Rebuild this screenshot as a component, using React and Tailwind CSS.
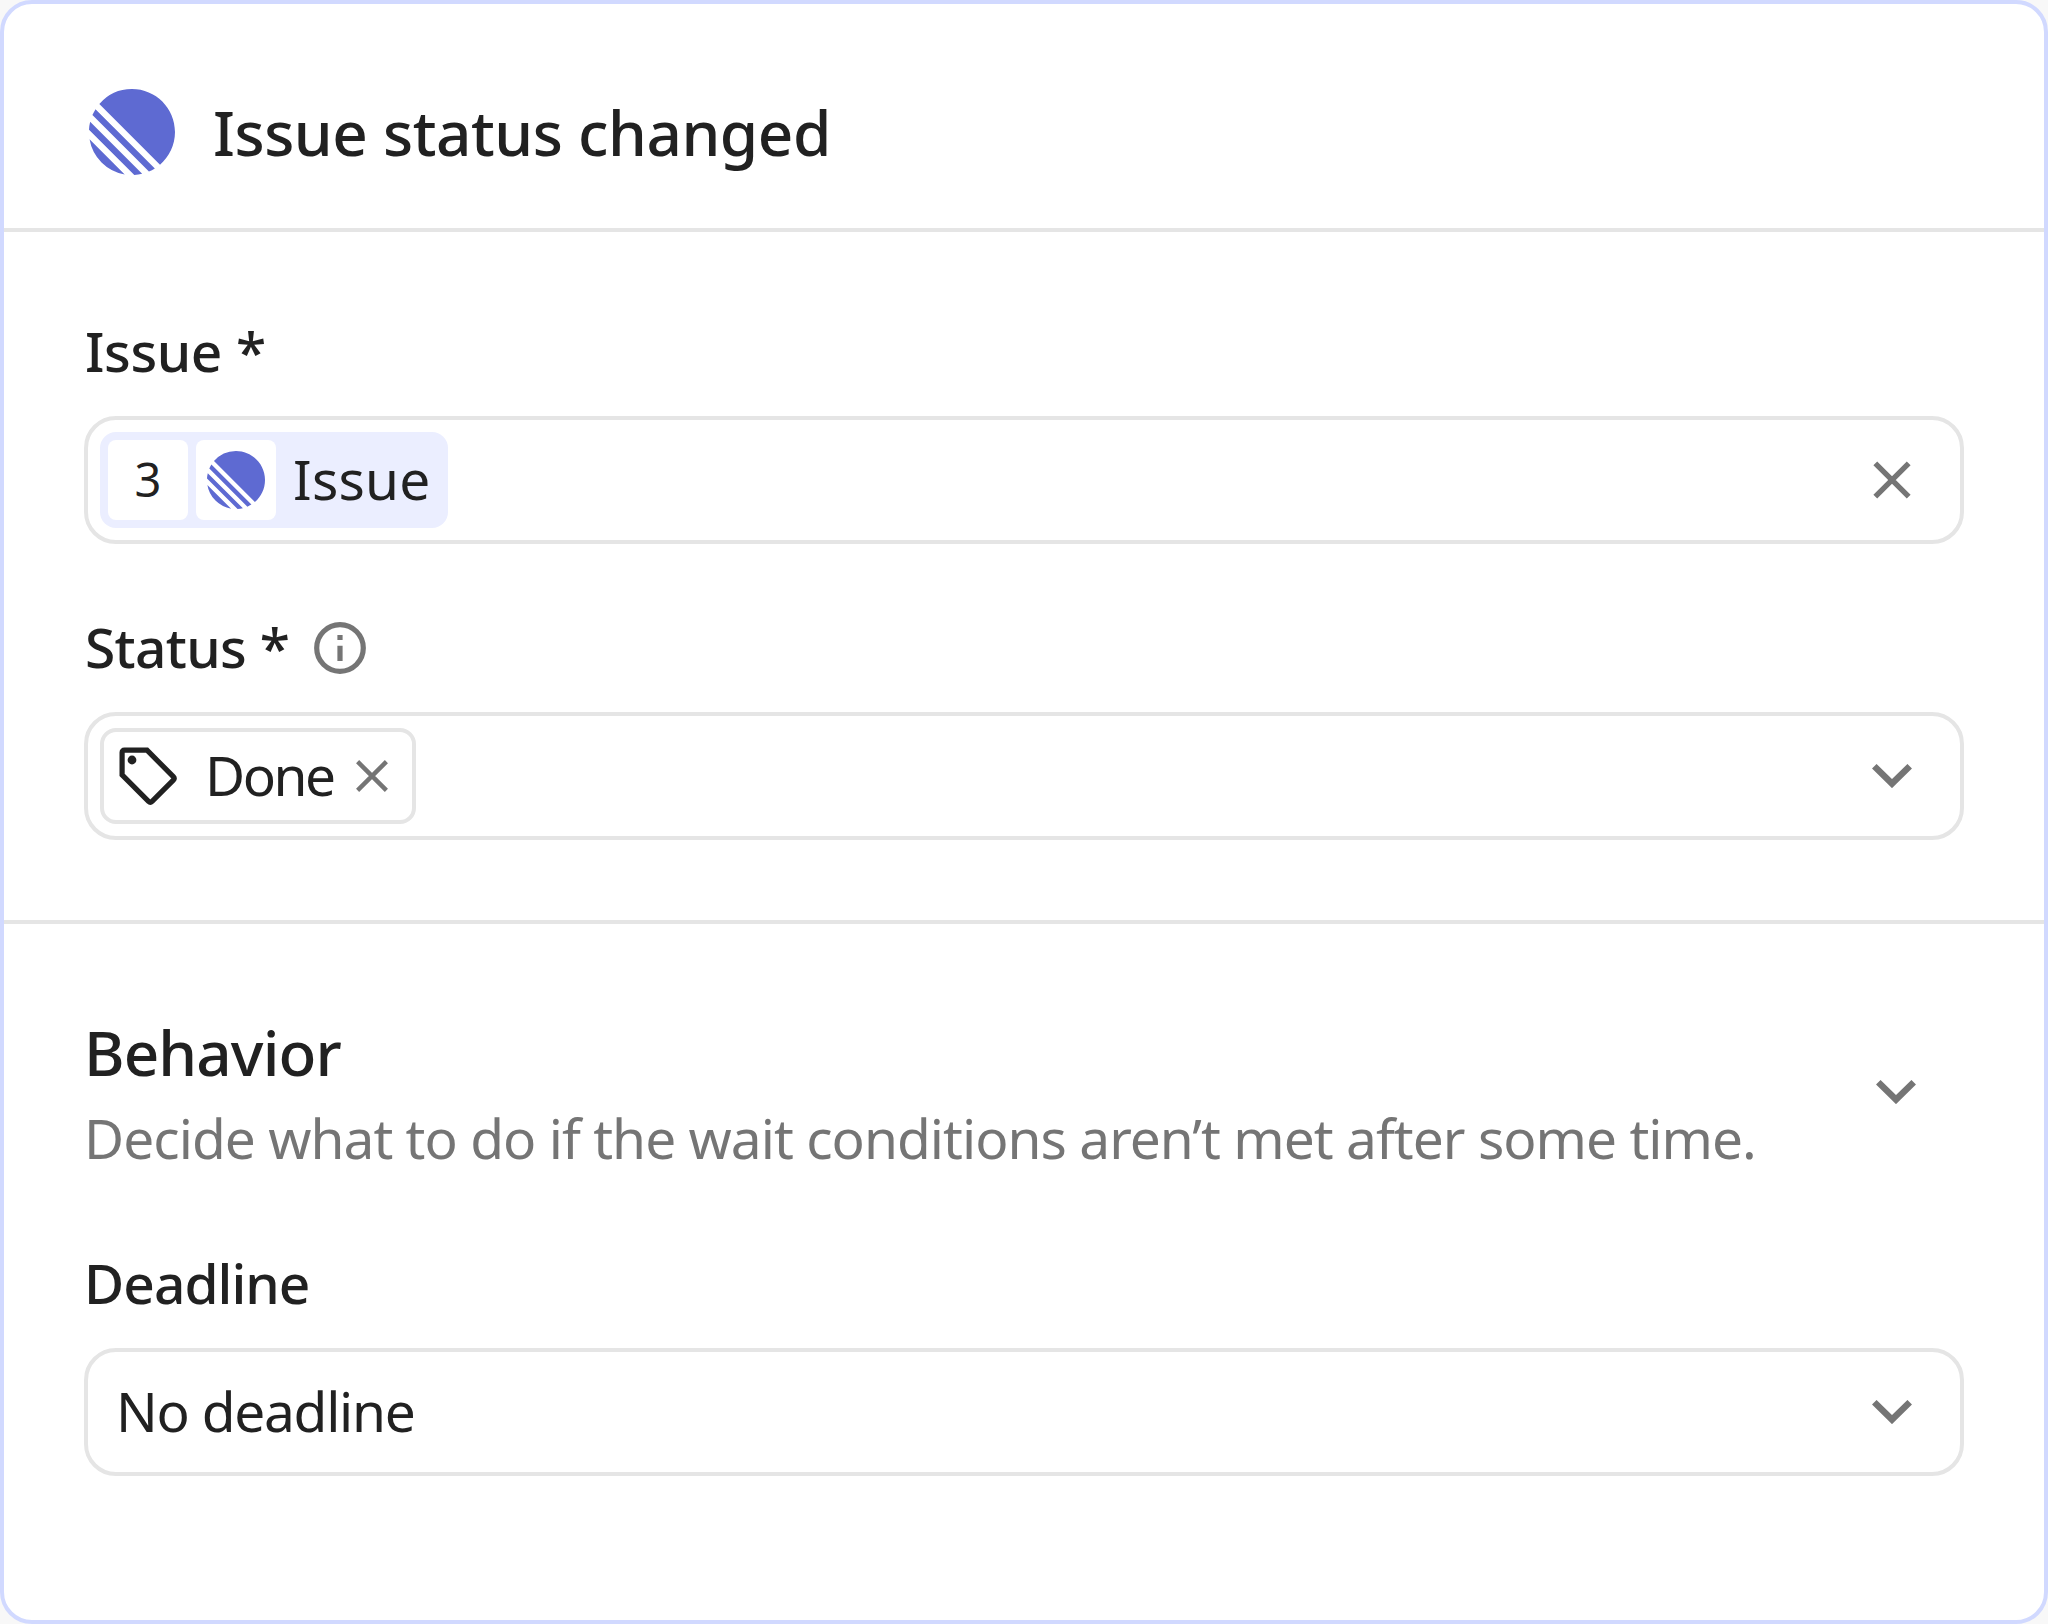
import React, { useState } from 'react';

const LinearLogo = ({ className }) => (
  <svg viewBox="0 0 24 24" className={className} fill="#5e6ad2">
    <path d="M2.886 4.18A11.982 11.982 0 0 1 11.99 0C18.624 0 24 5.376 24 12.009c0 3.64-1.62 6.903-4.18 9.105L2.887 4.18ZM1.817 5.626l16.556 16.556c-.524.33-1.075.62-1.65.866L.951 7.277c.247-.575.537-1.126.866-1.65ZM.322 9.163l14.515 14.515c-.71.172-1.443.282-2.195.322L0 11.358a12 12 0 0 1 .322-2.195Zm-.17 4.862 9.823 9.824a12.02 12.02 0 0 1-9.824-9.824Z" />
  </svg>
);

const ChevronIcon = () => (
  <svg viewBox="0 0 40 24" className="w-10 h-6 text-[#757575]" fill="none" stroke="currentColor" strokeWidth="6.5">
    <path d="M2.3 2.3 20 19.6 37.7 2.3" />
  </svg>
);

const CloseIcon = () => (
  <svg viewBox="0 0 40 40" className="w-10 h-10 text-[#757575]" fill="none" stroke="currentColor" strokeWidth="5.4">
    <path d="M3.3 3.3 36.7 36.7M36.7 3.3 3.3 36.7" />
  </svg>
);

const SmallCloseIcon = () => (
  <svg viewBox="0 0 32 32" className="w-8 h-8 text-[#757575]" fill="none" stroke="currentColor" strokeWidth="4.4">
    <path d="M1.6 1.6 30.4 30.4M30.4 1.6 1.6 30.4" />
  </svg>
);

const InfoIcon = () => (
  <svg viewBox="0 0 52 52" className="w-[52px] h-[52px] text-[#757575]" fill="none" stroke="currentColor" strokeWidth="5.2">
    <circle cx="26" cy="26" r="23.3" />
    <path d="M26 13v5M26 23.7v15.3" />
  </svg>
);

const TagIcon = () => (
  <svg viewBox="0 0 58 58" className="w-[58px] h-[58px] text-[#212121]" fill="none" stroke="currentColor" strokeWidth="5.2">
    <path d="M5.4 3.2H28L54.3 29.6Q56 31.4 54.3 33.2L33.1 54.3Q31.3 56 29.5 54.3L3.1 27.9V5.5Q3.1 3.2 5.4 3.2Z" />
    <circle cx="13" cy="13" r="4.4" fill="currentColor" stroke="none" />
  </svg>
);

const Field = ({ children, icon, className = 'pl-3' }) => (
  <div className={`flex items-center justify-between h-32 pr-12 border-4 border-[#e5e5e5] rounded-[32px] ${className}`}>
    {children}
    {icon}
  </div>
);

const App = () => {
  const [issue, setIssue] = useState({ step: 3, name: 'Issue' });
  const [status, setStatus] = useState('Done');

  return (
    <div className="w-[2048px] h-[1624px] bg-[#f8f8f8] text-[#212121] font-['Noto_Sans','Liberation_Sans',sans-serif]">
      <div className="flex flex-col h-full bg-white border-4 border-[#d1d9ff] rounded-[32px] overflow-hidden">
        <div className="flex items-center h-[228px] pt-8 pl-[85px] border-b-4 border-[#e5e5e5]">
          <LinearLogo className="w-[86px] h-[86px]" />
          <h1 className="ml-[38px] text-[62px] leading-[84px] font-medium tracking-[-0.46px]">Issue status changed</h1>
        </div>

        <div className="px-20 pt-[84px] pb-20 border-b-4 border-[#e5e5e5]">
          <div className="flex items-center h-[72px] mb-7">
            <label className="ml-px pb-0.5 text-[55px] leading-[70px] font-medium tracking-[-0.4px]">Issue *</label>
          </div>
          <Field icon={<button onClick={() => setIssue(null)}><CloseIcon /></button>}>
            {issue && (
              <div className="flex items-center w-[348px] h-24 pl-2 gap-2 bg-[#ebeeff] rounded-2xl">
                <div className="flex items-center justify-center w-20 h-20 bg-white rounded-lg text-[47px] leading-none pb-0.5">{issue.step}</div>
                <div className="flex items-center justify-center w-20 h-20 bg-white rounded-lg">
                  <LinearLogo className="w-[58px] h-[58px]" />
                </div>
                <span className="ml-[9px] pb-0.5 text-[55px] leading-[76px] tracking-[0.25px]">{issue.name}</span>
              </div>
            )}
          </Field>

          <div className="flex items-center h-[72px] mt-[68px] mb-7">
            <label className="w-[229px] ml-px pb-0.5 text-[55px] leading-[70px] font-medium tracking-[-0.65px]">Status *</label>
            <InfoIcon />
          </div>
          <Field icon={<button><ChevronIcon /></button>}>
            {status && (
              <div className="flex items-center w-[316px] h-24 pl-[15px] border-4 border-[#e5e5e5] rounded-2xl">
                <TagIcon />
                <span className="w-[152px] pl-7 pb-0.5 text-[55px] leading-[76px] tracking-[-2.5px]">{status}</span>
                <button className="ml-[27px]" onClick={() => setStatus('')}><SmallCloseIcon /></button>
              </div>
            )}
          </Field>
        </div>

        <div className="px-20 pt-[86px]">
          <div className="flex items-center justify-between pr-12">
            <div>
              <h2 className="text-[62px] leading-[84px] font-medium tracking-[-0.9px]">Behavior</h2>
              <p className="text-[55px] leading-[88px] tracking-[-0.96px] text-[#757575]">
                Decide what to do if the wait conditions aren’t met after some time.
              </p>
            </div>
            <button className="pb-2"><ChevronIcon /></button>
          </div>

          <div className="flex items-center h-[72px] mt-[66px] mb-7">
            <label className="pb-0.5 text-[55px] leading-[70px] font-medium tracking-[-0.95px]">Deadline</label>
          </div>
          <Field className="pl-7" icon={<button><ChevronIcon /></button>}>
            <span className="pb-0.5 text-[55px] leading-[76px] tracking-[-1.25px]">No deadline</span>
          </Field>
        </div>
      </div>
    </div>
  );
};

export default App;
